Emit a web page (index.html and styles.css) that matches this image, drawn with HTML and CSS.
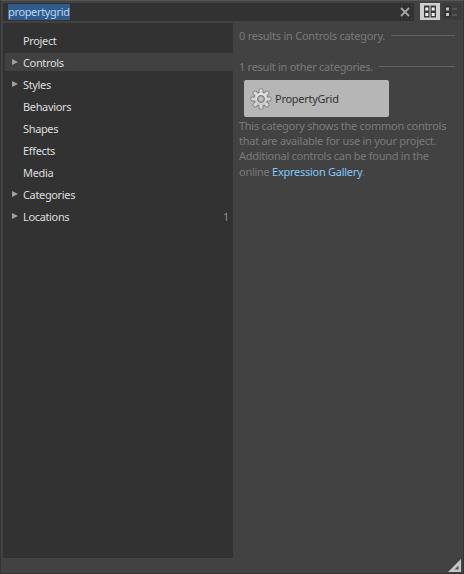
FILE: index.html
```html
<!DOCTYPE html>
<html lang="en">
<head>
<meta charset="utf-8">
<title>Assets</title>
<link rel="stylesheet" href="styles.css">
</head>
<body>
<div class="panel">
  <header class="toolbar">
    <div class="search">
      <span class="query">propertygrid</span>
      <svg class="clear" width="10" height="10" viewBox="0 0 10 10"><path d="M1 1l8 8M9 1L1 9"/></svg>
    </div>
    <div class="views">
      <div class="view selected">
        <svg width="20" height="17" viewBox="0 0 20 17"><path fill="#3a3a3a" d="M4 2.500h5.500v12H4zM10.500 2.500H16v12h-5.500z"/><path fill="#f0f0f0" d="M5.300 4.500h3v3h-3zM11.700 4.500h3v3h-3zM5.300 10h3v3h-3zM11.700 10h3v3h-3z"/></svg>
      </div>
      <div class="view">
        <svg width="20" height="17" viewBox="0 0 20 17"><path fill="#303030" d="M3 2.500h5.500v12H3z"/><path fill="#c4c4c4" d="M4 4.500h3v3H4zM4 10h3v3H4z"/><path fill="#555" d="M10 5h5v2h-5zM10 11h5v2h-5z"/></svg>
      </div>
    </div>
  </header>
  <div class="content">
    <ul class="tree">
      <li class="row"><span class="arrow"></span><span class="name">Project</span></li>
      <li class="row active"><span class="arrow shown"></span><span class="name">Controls</span></li>
      <li class="row"><span class="arrow shown"></span><span class="name">Styles</span></li>
      <li class="row"><span class="arrow"></span><span class="name">Behaviors</span></li>
      <li class="row"><span class="arrow"></span><span class="name">Shapes</span></li>
      <li class="row"><span class="arrow"></span><span class="name">Effects</span></li>
      <li class="row"><span class="arrow"></span><span class="name">Media</span></li>
      <li class="row"><span class="arrow shown"></span><span class="name">Categories</span></li>
      <li class="row"><span class="arrow shown"></span><span class="name">Locations</span><span class="count">1</span></li>
    </ul>
    <main class="results">
      <h2 class="heading">0 results in Controls category.</h2>
      <h2 class="heading other">1 result in other categories.</h2>
      <div class="asset">
        <svg width="22" height="22" viewBox="-11 -11 22 22">
          <defs>
            <linearGradient id="metal" x1="0" y1="0" x2="0" y2="1"><stop offset="0" stop-color="#e6e6e6"/><stop offset="1" stop-color="#c8c8c8"/></linearGradient>
            <g id="teeth"><rect x="-1.600" y="-9.700" width="3.200" height="19.400" rx="1"/><rect x="-1.600" y="-9.700" width="3.200" height="19.400" rx="1" transform="rotate(45)"/><rect x="-1.600" y="-9.700" width="3.200" height="19.400" rx="1" transform="rotate(90)"/><rect x="-1.600" y="-9.700" width="3.200" height="19.400" rx="1" transform="rotate(135)"/></g>
          </defs>
          <use href="#teeth" fill="#808080" stroke="#808080" stroke-width="1.800"/>
          <circle r="7.700" fill="#808080"/>
          <use href="#teeth" fill="#d8d8d8"/>
          <circle r="6.300" fill="url(#metal)"/>
          <circle r="3.300" fill="#b0b0b0" stroke="#808080" stroke-width="1.300"/>
          <circle r="1.400" fill="#ccc"/>
        </svg>
        <span class="asset-name">PropertyGrid</span>
      </div>
      <p class="hint">This category shows the common controls<br>that are available for use in your project.<br>Additional controls can be found in the<br>online <a class="link">Expression Gallery</a>.</p>
    </main>
  </div>
  <footer class="status">
    <svg width="14" height="14" viewBox="0 0 14 14"><path fill="#c6c6c6" d="M13 0v13H0z"/><path fill="#555" d="M10.500 6.500v4H6.500z"/></svg>
  </footer>
</div>
</body>
</html>
```
FILE: styles.css
```css
* { box-sizing: border-box; }
body {
  margin: 0;
  background: #424242;
  font: 11px/15px "Noto Sans", "Open Sans", sans-serif;
  letter-spacing: -0.27px;
}
.panel {
  display: flex;
  flex-direction: column;
  width: 464px;
  height: 574px;
  padding: 2px 1px 0 2px;
  border: 1px solid #343434;
  border-top-color: #555;
}
.toolbar { display: flex; height: 20px; justify-content: space-between; }
.search {
  display: flex;
  align-items: center;
  justify-content: space-between;
  width: 411px;
  height: 18px;
  padding: 0 4px 0 5px;
  background: #323232;
}
.query { height: 16px; margin-top: -1px; background: #315b8b; color: #b9d7f5; letter-spacing: -0.35px; }
.clear { fill: none; stroke: #a4a4a4; stroke-width: 1.800; }
.views { display: flex; gap: 2px; }
.view { width: 20px; height: 17px; background: #3c3c3c; }
.view.selected { background: #d0d0d0; }
.view svg { display: block; }
.content { display: flex; height: 535px; }
.tree {
  width: 230px;
  margin: 0;
  padding: 6px 0 0 2px;
  list-style: none;
  background: #323232;
  color: #dedede;
  letter-spacing: -0.35px;
}
.row { display: flex; align-items: center; height: 22px; padding: 0 4px 0 7px; }
.row.active { background: linear-gradient(#414141, #414141) 0 2px / 100% 18px no-repeat; }
.arrow { width: 11px; }
.arrow.shown::before {
  content: "";
  display: block;
  width: 0;
  border: 3px solid transparent;
  border-left: 6px solid #a0a0a0;
  border-right: 0;
}
.count { margin-left: auto; color: #909090; }
.results { flex: 1; padding: 5px 7px 0 6px; color: #7a7a7a; }
.heading {
  display: flex;
  align-items: center;
  gap: 6px;
  margin: 0;
  font-size: 11px;
  font-weight: 400;
  letter-spacing: -0.23px;
}
.heading::after { content: ""; flex: 1; height: 1px; background: #626262; }
.other { margin-top: 16px; letter-spacing: -0.27px; }
.asset {
  display: flex;
  align-items: center;
  gap: 3px;
  width: 145px;
  height: 37px;
  margin: 6px 0 1px 5px;
  padding-left: 6px;
  border-radius: 2px;
  background: #b6b6b6;
  color: #333;
}
.hint { margin: 0; line-height: 15.200px; white-space: nowrap; }
.link { color: #83c9f3; }
.status { display: flex; flex: 1; align-items: flex-end; justify-content: flex-end; }
.status svg { display: block; }
```
